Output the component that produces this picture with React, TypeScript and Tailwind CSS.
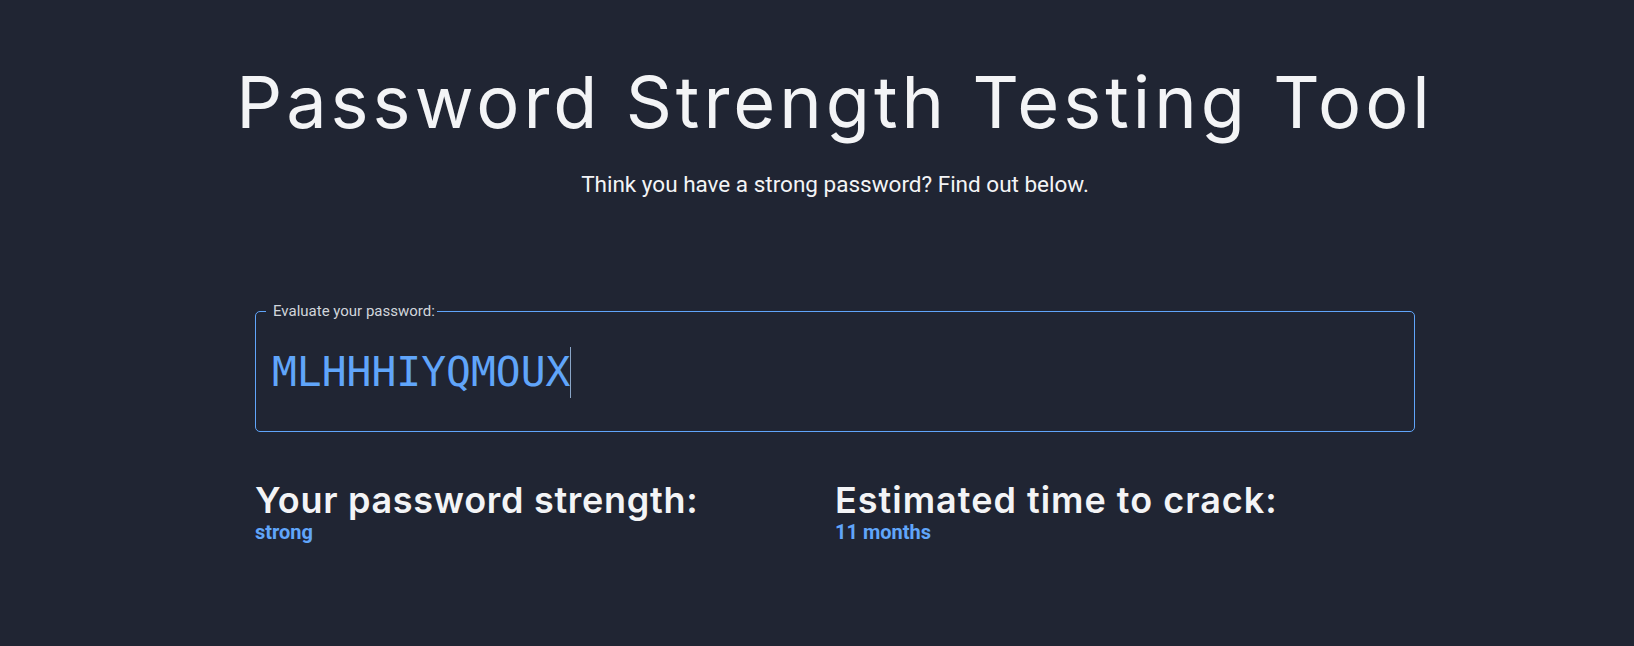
import React from "react";

export default function App() {
  return (
    <div className="min-h-screen w-full bg-[#202533] text-[#f3f4f6]">
      <div className="flex flex-col items-center pl-[36px] pt-[66px]">
        <h1 className="text-[72px] leading-[72px] font-normal tracking-[4px] text-[#f3f4f6] [font-family:Inter,'Noto_Sans',sans-serif]">
          Password Strength Testing Tool
        </h1>
        <p className="mt-8 text-[22.5px] leading-[28px] text-[#f3f4f6] [font-family:Roboto,'Liberation_Sans',sans-serif]">
          Think you have a strong password? Find out below.
        </p>
        <div className="mt-[103px] w-[1160px]">
          <fieldset className="rounded-[5px] border border-[#60a5fa] pl-[16px] pr-4 pt-[25px] pb-[33px]">
            <legend className="ml-[-6px] pl-[7px] pr-[2px] text-[15px] leading-[20px] text-[#d1d5db] [font-family:Roboto,'Liberation_Sans',sans-serif]">
              Evaluate your password:
            </legend>
            <div className="flex h-[52px] items-center">
              <span className="text-[41.3px] leading-[52px] text-[#60a5fa] [font-family:'DejaVu_Sans_Mono',monospace]">
                MLHHHIYQMOUX
              </span>
              <span className="h-[51px] w-px bg-[#8aa6c8]" />
            </div>
          </fieldset>
          <div className="mt-12 grid grid-cols-2">
            <div>
              <h2 className="text-[36px] leading-[40px] font-semibold tracking-[0.7px] text-[#f3f4f6] [font-family:Inter,'Noto_Sans',sans-serif]">
                Your password strength:
              </h2>
              <div className="text-[20px] leading-[24px] font-bold text-[#60a5fa] [font-family:Roboto,'Liberation_Sans',sans-serif]">
                strong
              </div>
            </div>
            <div>
              <h2 className="text-[36px] leading-[40px] font-semibold tracking-[1px] text-[#f3f4f6] [font-family:Inter,'Noto_Sans',sans-serif]">
                Estimated time to crack:
              </h2>
              <div className="text-[20px] leading-[24px] font-bold text-[#60a5fa] [font-family:Roboto,'Liberation_Sans',sans-serif]">
                11 months
              </div>
            </div>
          </div>
        </div>
      </div>
    </div>
  );
}
